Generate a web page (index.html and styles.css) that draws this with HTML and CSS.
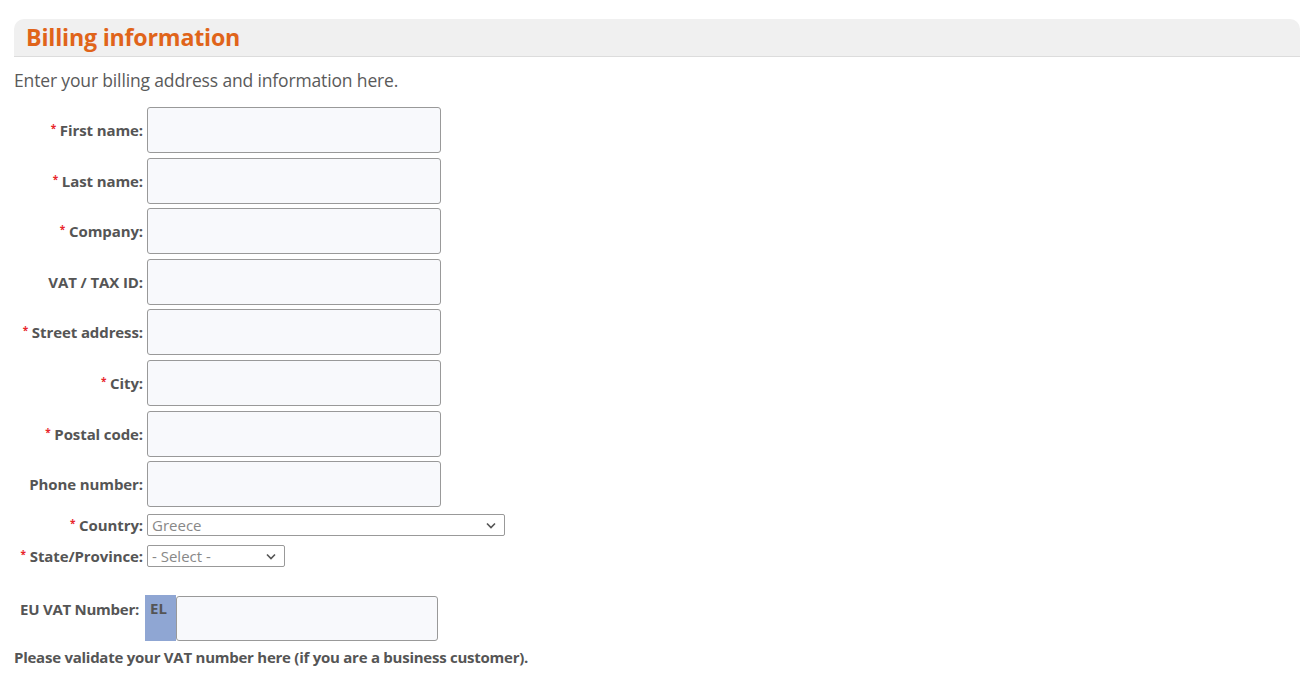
FILE: index.html
```html
<!DOCTYPE html>
<html>
<head>
<meta charset="utf-8">
<link rel="stylesheet" href="styles.css">
</head>
<body>
<div class="page">
  <h2 class="section-title">Billing information</h2>
  <p class="intro">Enter your billing address and information here.</p>
  <div class="form">
    <div class="row"><label class="lbl"><span class="req">*</span> First name:</label><input class="txt" type="text"></div>
    <div class="row"><label class="lbl"><span class="req">*</span> Last name:</label><input class="txt" type="text"></div>
    <div class="row"><label class="lbl"><span class="req">*</span> Company:</label><input class="txt" type="text"></div>
    <div class="row"><label class="lbl">VAT / TAX ID:</label><input class="txt" type="text"></div>
    <div class="row"><label class="lbl"><span class="req">*</span> Street address:</label><input class="txt" type="text"></div>
    <div class="row"><label class="lbl"><span class="req">*</span> City:</label><input class="txt" type="text"></div>
    <div class="row"><label class="lbl"><span class="req">*</span> Postal code:</label><input class="txt" type="text"></div>
    <div class="row"><label class="lbl">Phone number:</label><input class="txt" type="text"></div>
    <div class="row row-sel row-country"><label class="lbl"><span class="req">*</span> Country:</label>
      <div class="sel sel-wide"><span>Greece</span><svg width="10" height="7" viewBox="0 0 10 7"><path d="M1 1.5 L5 5.5 L9 1.5" fill="none" stroke="#555" stroke-width="1.6"/></svg></div>
    </div>
    <div class="row row-sel row-state"><label class="lbl"><span class="req">*</span> State/Province:</label>
      <div class="sel sel-narrow"><span>- Select -</span><svg width="10" height="7" viewBox="0 0 10 7"><path d="M1 1.5 L5 5.5 L9 1.5" fill="none" stroke="#555" stroke-width="1.6"/></svg></div>
    </div>
    <div class="vat-row">
      <label class="vat-lbl">EU VAT Number:</label>
      <span class="vat-prefix">EL</span><input class="txt vat-input" type="text">
    </div>
  </div>
  <p class="note">Please validate your VAT number here (if you are a business customer).</p>
</div>
</body>
</html>
```

FILE: styles.css
```css
* { box-sizing: border-box; }
body {
  margin: 0;
  background: #fff;
  font-family: "Open Sans", "Liberation Sans", sans-serif;
  color: #555;
}
.page {
  padding: 19px 8px 0 14px;
}
.section-title {
  margin: 0;
  height: 38px;
  line-height: 36px;
  padding-left: 12px;
  font-size: 23.2px;
  font-weight: 700;
  color: #e0641a;
  background: #f0f0f0;
  border-radius: 10px 10px 0 0;
  border-bottom: 1px solid #dcdcdc;
  letter-spacing: -0.2px;
}
.intro {
  margin: 11px 0 0;
  font-size: 17.5px;
  line-height: 24px;
  color: #5a5a5a;
  letter-spacing: -0.15px;
}
.form {
  margin-top: 15px;
  display: flex;
  flex-direction: column;
}
.row {
  display: flex;
  align-items: center;
  margin-bottom: 4.6px;
}
.lbl {
  width: 129px;
  margin-right: 4px;
  text-align: right;
  font-size: 15px;
  font-weight: 700;
  color: #555;
  white-space: nowrap;
  letter-spacing: -0.1px;
}
.req {
  color: #e8252b;
  font-size: 10px;
  vertical-align: 4px;
}
.txt {
  width: 294px;
  height: 46px;
  border: 1px solid #999;
  border-radius: 3px;
  background: #f8f9fc;
  margin: 0;
  padding: 0 6px;
}
.row-country { margin-top: 2.5px; margin-bottom: 9px; }
.row-state { margin-bottom: 28px; }
.sel {
  height: 22px;
  border: 1px solid #999;
  border-radius: 2px;
  background: #fff;
  display: flex;
  align-items: center;
  justify-content: space-between;
  padding: 0 8px 0 4px;
  font-size: 15px;
  color: #888;
}
.sel-wide { width: 358px; }
.sel-narrow { width: 138px; }
.vat-row {
  display: flex;
  align-items: flex-start;
}
.vat-lbl {
  width: 125px;
  padding-left: 6px;
  padding-top: 4px;
  font-size: 15px;
  font-weight: 700;
  color: #555;
  white-space: nowrap;
  letter-spacing: -0.25px;
}
.vat-prefix {
  width: 31px;
  height: 46px;
  margin-left: 6px;
  background: #8fa6d3;
  color: #555;
  font-size: 15px;
  font-weight: 700;
  padding: 3px 0 0 5px;
}
.vat-input {
  width: 262px;
  margin-top: 1px;
  height: 45px;
}
.note {
  margin: 6px 0 0;
  font-size: 15px;
  font-weight: 700;
  color: #555;
  letter-spacing: -0.25px;
}
```
